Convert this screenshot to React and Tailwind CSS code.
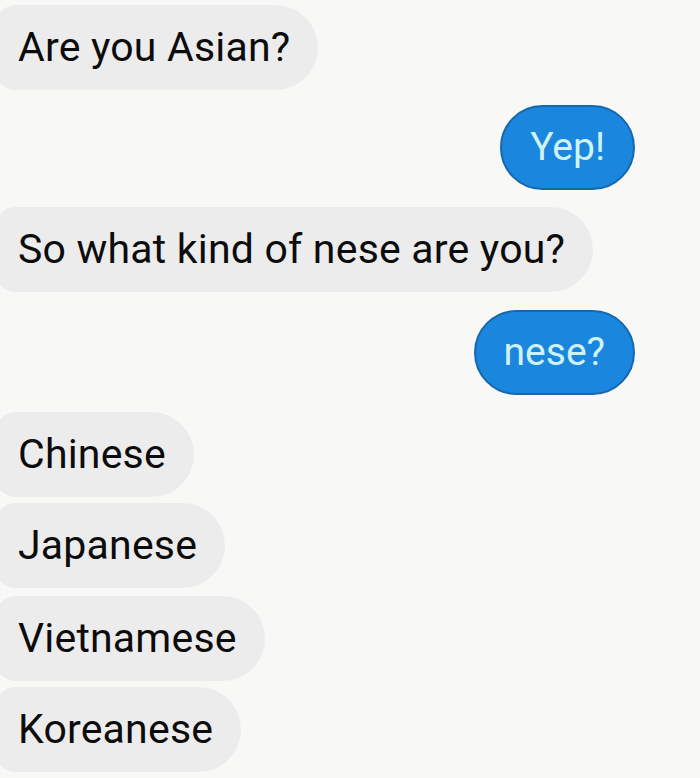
import React from 'react';

const Left = ({ text, className = '' }) => (
  <div className={`self-start h-[85px] flex items-center pl-[22px] pr-[28px] bg-[#ececed] rounded-r-[43px] rounded-l-[20px] -ml-[4px] ${className}`}>
    <span className="text-[41px] text-[#0c0c0c] leading-none tracking-[0.2px]">{text}</span>
  </div>
);

const Right = ({ text, className = '' }) => (
  <div className={`self-end mr-[65px] h-[85px] flex items-center px-[28px] bg-[#1a86de] border-2 border-[#1767ad] rounded-full ${className}`}>
    <span className="text-[39px] text-[#cff3f2] leading-none">{text}</span>
  </div>
);

export default function App() {
  return (
    <div
      className="w-[700px] h-[778px] overflow-hidden bg-[#f8f9f7] flex flex-col pt-[5px]"
      style={{ fontFamily: 'Roboto, "Noto Sans", sans-serif' }}
    >
      <Left text="Are you Asian?" />
      <Right text="Yep!" className="mt-[15px]" />
      <Left text="So what kind of nese are you?" className="mt-[17px]" />
      <Right text="nese?" className="mt-[18px]" />
      <Left text="Chinese" className="mt-[17px]" />
      <Left text="Japanese" className="mt-[6px]" />
      <Left text="Vietnamese" className="mt-[8px]" />
      <Left text="Koreanese" className="mt-[6px]" />
    </div>
  );
}
